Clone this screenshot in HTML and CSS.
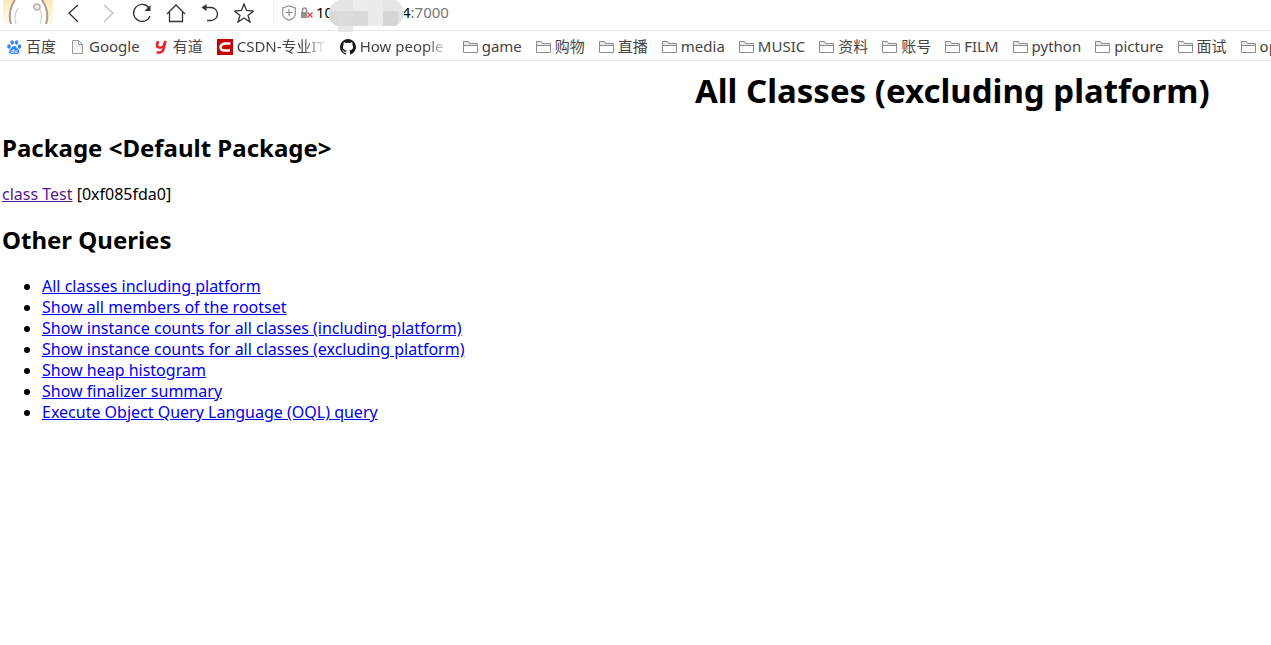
FILE: index.html
```html
<!DOCTYPE html>
<html lang="en">
<head>
<meta charset="utf-8">
<title>All Classes (excluding platform)</title>
<link rel="stylesheet" href="styles.css">
</head>
<body>
<svg class="defs" aria-hidden="true">
  <symbol id="folder" viewBox="0 0 15 14"><path d="M1 2h5l1 2h7v2H1z" fill="#e9e9e9"/><path d="M.5 12.500v-11h5l1 2h8v9zM1 5.500h13" fill="none" stroke="#8a8a8a"/></symbol>
</svg>
<header class="browser">
  <div class="toolbar">
    <svg class="avatar" viewBox="0 0 50 24" aria-hidden="true">
      <defs><linearGradient id="sky" x2="0" y2="1"><stop stop-color="#fbe9b8"/><stop offset="1" stop-color="#fffaf0"/></linearGradient></defs>
      <path d="M0 0h50v24H0z" fill="url(#sky)"/>
      <path d="M12 0C8 6 5 14 8 24h35c3-9 0-18-4-24z" fill="#fff"/>
      <path d="M12 0C8 6 5 14 8 24M39 0c4 6 7 15 4 24" fill="none" stroke="#b29a91" stroke-width="2"/>
      <path d="M15 8c-3 6-4 10-2 16M37 10c2 5 2 9 0 14" fill="none" stroke="#cdbcb5"/>
      <circle cx="34" cy="7" r="3" fill="#eee" stroke="#bbb2ae" stroke-width="1.500"/>
    </svg>
    <nav class="controls" aria-label="Browser">
      <button aria-label="Back"><svg viewBox="0 0 20 20"><path d="M14 2 5 10l9 9"/></svg></button>
      <button aria-label="Forward" class="dim"><svg viewBox="0 0 20 20"><path d="m6 2 9 8-9 9"/></svg></button>
      <button aria-label="Reload"><svg viewBox="0 0 20 20"><path d="M17 5a8.500 8.500 0 1 0 1 8"/><path class="solid" d="M18.500 2v6h-6z"/></svg></button>
      <button aria-label="Home"><svg viewBox="0 0 20 20"><path d="M1 11 10 2l9 9M3.500 9v9.500h13V9"/></svg></button>
      <button aria-label="Undo"><svg viewBox="0 0 20 20"><path d="M4 4.500h7a6.500 6.500 0 0 1 0 13H7"/><path class="solid" d="m1.500 4.500 5-3.500v7z"/></svg></button>
      <button aria-label="Favorite"><svg viewBox="0 0 20 20"><path d="m10 1 2.500 6.500 7 .5-5.500 4.500 2 6.500-6-4-6 4 2-6.500L.5 8l7-.5z"/></svg></button>
    </nav>
    <div class="address">
      <svg class="shield" viewBox="0 0 14 16" aria-hidden="true"><path d="M7 .8 13.300 3v6c0 3-3 5-6.300 6.300C3.700 14 .7 12 .7 9V3zM7 4v7M3.500 7.500h7" fill="none" stroke="#888" stroke-width="1.100"/></svg>
      <svg class="lock" viewBox="0 0 14 14" aria-hidden="true"><path d="M1 6h7v6H1z" fill="#929292"/><path d="M2.500 6V4a2 2 0 0 1 4 0v2" fill="none" stroke="#929292" stroke-width="1.500"/><path d="m7.500 6.500 5 5m0-5-5 5" stroke="#fff" stroke-width="3"/><path d="m7.500 6.500 5 5m0-5-5 5" stroke="#e0393e" stroke-width="1.200"/></svg>
      <span class="host">10</span>
      <svg class="mask" viewBox="0 0 80 34" aria-hidden="true">
        <defs><clipPath id="blob"><path d="M9 0h57q8 3 9 13-1 10-9 13H24v6H9v-6Q0 24 0 14T9 0"/></clipPath></defs>
        <g clip-path="url(#blob)"><path fill="#e5e5e5" d="M0 0h80v34H0z"/><path fill="#ededed" d="M24 0h15v11H24z"/><path fill="#eeece9" d="M39 0h15v26H39z"/><path fill="#d9d9d9" d="M0 11h9v15H0z"/><path fill="#dddbd9" d="M9 11h15v15H9z"/><path fill="#e8e8e8" d="M9 26h15v6H9z"/><path fill="#d8dade" d="M24 11h15v15H24z"/><path fill="#e6e7e9" d="M54 0h15v11H54z"/><path fill="#d5d6d9" d="M54 11h15v15H54z"/><path fill="#e2e4e4" d="M69 11h8v15h-8z"/></g>
      </svg>
      <span class="port"><b>4</b>:7000</span>
    </div>
  </div>
  <nav class="bookmarks" aria-label="Bookmarks">
    <a href="#"><svg viewBox="0 0 15 14"><g fill="#3385ff"><ellipse cx="2" cy="6.500" rx="1.800" ry="2.200"/><ellipse cx="5.200" cy="2.500" rx="1.700" ry="2.300"/><ellipse cx="9.500" cy="2.500" rx="1.700" ry="2.300"/><ellipse cx="12.500" cy="6.500" rx="1.700" ry="2.200"/><path d="M7.300 6c2 0 2 2 4 3.200 2 2 .8 4.800-1.300 4.800H4.500C2 14 1.300 11 3 9.500 5 8 5.300 6 7.300 6"/></g><path d="M6.500 9v3.500H5a1 1 0 0 1 0-2h1.500M8 10v2.500h2V10" fill="none" stroke="#fff" stroke-width=".8"/></svg><span>百度</span></a>
    <a href="#"><svg viewBox="0 0 15 14"><path d="M2.500.5h6l4 4v9h-10zM8.500.5v4h4" fill="#f5f5f5" stroke="#999"/></svg><span>Google</span></a>
    <a href="#"><svg viewBox="0 0 15 14"><path d="M4 1 3 5q0 2.500 2.500 2.500H9L11.500 1 9.500 9q-1 3.500-4 3.500H2.500" fill="none" stroke="#e8252b" stroke-width="2.600"/></svg><span>有道</span></a>
    <a href="#" class="wide"><svg viewBox="0 0 16 16"><path fill="#c80000" d="M0 0h16v16H0z"/><path d="M13.500 4.500H8Q4 5 3.500 8q0 3.500 4 3.500H13" fill="none" stroke="#fff" stroke-width="2.500"/></svg><span class="fade">CSDN-专业IT</span></a>
    <a href="#" class="wide"><svg viewBox="0 0 16 16"><path fill="#191717" fill-rule="evenodd" d="M8 0a8 8 0 0 0-2.530 15.590c.4.070.55-.17.550-.38V13.700c-2.230.48-2.700-.95-2.700-.95-.36-.92-.89-1.170-.89-1.170-.73-.5.060-.49.060-.49.800.060 1.230.83 1.230.83.710 1.220 1.870.87 2.330.66.070-.52.280-.87.500-1.070-1.770-.2-3.640-.89-3.640-3.950 0-.87.310-1.590.820-2.150-.08-.2-.36-1.020.080-2.120 0 0 .67-.21 2.200.82a7.600 7.600 0 0 1 4 0c1.530-1.040 2.200-.82 2.200-.82.440 1.100.160 1.920.080 2.120.510.560.820 1.270.820 2.150 0 3.070-1.870 3.750-3.650 3.950.290.250.540.730.540 1.480v2.200c0 .210.150.460.550.380A8 8 0 0 0 8 0"/></svg><span class="fade">How people</span></a>
    <a href="#"><svg><use href="#folder"/></svg><span>game</span></a>
    <a href="#"><svg><use href="#folder"/></svg><span>购物</span></a>
    <a href="#"><svg><use href="#folder"/></svg><span>直播</span></a>
    <a href="#"><svg><use href="#folder"/></svg><span>media</span></a>
    <a href="#"><svg><use href="#folder"/></svg><span>MUSIC</span></a>
    <a href="#"><svg><use href="#folder"/></svg><span>资料</span></a>
    <a href="#"><svg><use href="#folder"/></svg><span>账号</span></a>
    <a href="#"><svg><use href="#folder"/></svg><span>FILM</span></a>
    <a href="#"><svg><use href="#folder"/></svg><span>python</span></a>
    <a href="#"><svg><use href="#folder"/></svg><span>picture</span></a>
    <a href="#"><svg><use href="#folder"/></svg><span>面试</span></a>
    <a href="#"><svg><use href="#folder"/></svg><span>op</span></a>
  </nav>
</header>
<main>
  <h1>All Classes (excluding platform)</h1>
  <h2>Package &lt;Default Package&gt;</h2>
  <p><a class="visited" href="#">class Test</a> [0xf085fda0]</p>
  <h2>Other Queries</h2>
  <ul>
    <li><a href="#">All classes including platform</a></li>
    <li><a href="#">Show all members of the rootset</a></li>
    <li><a href="#">Show instance counts for all classes (including platform)</a></li>
    <li><a href="#">Show instance counts for all classes (excluding platform)</a></li>
    <li><a href="#">Show heap histogram</a></li>
    <li><a href="#">Show finalizer summary</a></li>
    <li><a href="#">Execute Object Query Language (OQL) query</a></li>
  </ul>
</main>
</body>
</html>
```

FILE: styles.css
```css
* { box-sizing: border-box; }
body {
  margin: 0;
  overflow-x: hidden;
  background: #fff;
  color: #000;
  font: 16px/21px "Noto Sans", "Noto Sans CJK SC", sans-serif;
}
.defs { position: absolute; width: 0; height: 0; }
.toolbar {
  display: flex;
  height: 31px;
  border-bottom: 1px solid #e3e6ea;
}
.avatar { width: 50px; height: 24px; margin-left: 3px; }
.controls { display: flex; gap: 14px; margin: 3px 0 0 11px; }
.controls button {
  width: 20px;
  height: 20px;
  padding: 0;
  border: 0;
  background: none;
}
.controls svg {
  display: block;
  width: 20px;
  height: 20px;
  fill: none;
  stroke: #333;
  stroke-width: 1.3;
}
.controls .dim svg { stroke: #bbb; }
.controls .solid { fill: #333; stroke: none; }
.address {
  display: flex;
  align-items: flex-start;
  height: 24px;
  margin-left: 19px;
  padding-left: 8px;
  border-left: 1px solid #eee;
  font-size: 15px;
  line-height: 25px;
}
.shield { width: 14px; height: 16px; margin-top: 5px; }
.lock { width: 14px; height: 14px; margin: 6px 0 0 4px; }
.host { width: 13px; margin-left: 2px; }
.mask { z-index: 1; width: 80px; height: 34px; }
.port { margin-left: -7px; color: #777; }
.port b { color: #000; font-weight: 400; }
.bookmarks {
  display: flex;
  align-items: center;
  gap: 14px;
  height: 30px;
  padding: 2px 0 0 7px;
  overflow: hidden;
  border-bottom: 1px solid #e3e6ea;
  font-size: 15px;
  white-space: nowrap;
}
.bookmarks a {
  display: flex;
  flex: none;
  align-items: center;
  gap: 4px;
  color: #444;
  text-decoration: none;
}
.bookmarks svg { width: 15px; height: 14px; }
.bookmarks .wide svg { width: 16px; height: 16px; }
.fade {
  width: 89px;
  overflow: hidden;
  mask-image: linear-gradient(to right, #000 75%, transparent);
}
main { padding: 7px 2px; }
h1 {
  width: 150%;
  margin: 0 0 19px;
  font-size: 33px;
  line-height: 45px;
  text-align: center;
}
h2 { margin: 0 0 20px; font-size: 24px; line-height: 32px; }
p { margin: 0 0 19px; }
main a { color: #00e; }
main .visited { color: #551a8b; }
ul { margin: 0; padding-left: 40px; }
```
